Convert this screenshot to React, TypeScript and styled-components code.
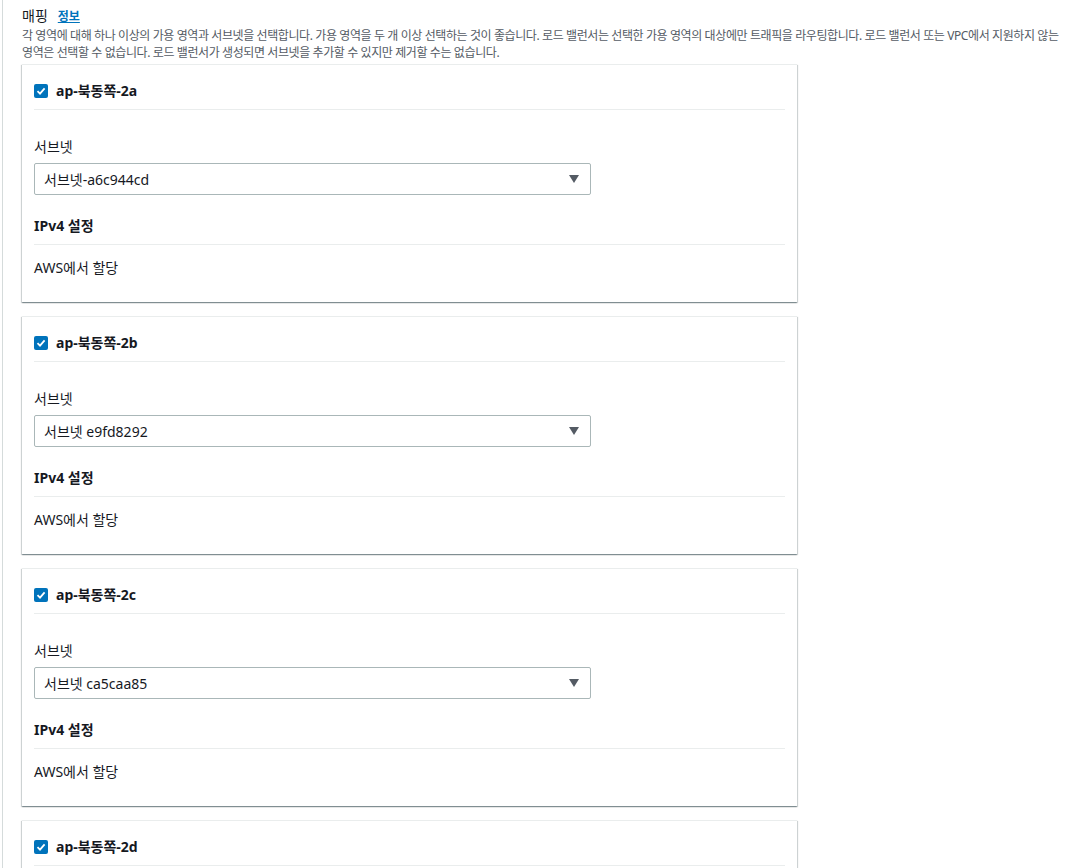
import React from 'react';
import styled, { createGlobalStyle } from 'styled-components';

const GlobalStyle = createGlobalStyle`
    body {
        margin: 0;
        background: #ffffff;
        font-family: 'Noto Sans', 'Noto Sans CJK KR', sans-serif;
        color: #16191f;
    }
`;

const Page = styled.div`
    margin-left: 2px;
    border-left: 1px solid #d5dbdb;
    padding: 6px 4px 40px 19px;
    min-height: 868px;
    box-sizing: border-box;
`;

const Heading = styled.div`
    display: flex;
    align-items: baseline;
    gap: 10px;
    font-size: 14px;
    line-height: 20px;
    color: #16191f;
`;

const InfoLink = styled.a`
    font-size: 12px;
    font-weight: 700;
    color: #0073bb;
    text-decoration: underline;
`;

const Description = styled.p`
    margin: 0 0 3px;
    font-size: 12px;
    line-height: 17px;
    letter-spacing: -0.4px;
    word-break: keep-all;
    color: #545b64;
    max-width: 1046px;
`;

const CardList = styled.div`
    display: flex;
    flex-direction: column;
    gap: 14px;
    width: 775px;
`;

const Card = styled.div`
    background: #ffffff;
    border-top: 1px solid #eaeded;
    box-shadow: 0 1px 1px 0 rgba(0, 28, 36, 0.3), 1px 1px 1px 0 rgba(0, 28, 36, 0.15),
        -1px 1px 1px 0 rgba(0, 28, 36, 0.15);
    padding: 0 12px 24px;
`;

const CardHeader = styled.div`
    display: flex;
    align-items: center;
    gap: 8px;
    padding: 17px 0 9px;
    border-bottom: 1px solid #eaeded;
`;

const CheckBox = styled.span`
    width: 14px;
    height: 14px;
    border-radius: 2px;
    background: #0073bb;
    display: flex;
    align-items: center;
    justify-content: center;
`;

const Title = styled.span`
    font-size: 14px;
    line-height: 18px;
    font-weight: 700;
`;

const Label = styled.div`
    margin-top: 27px;
    font-size: 14px;
    line-height: 20px;
`;

const Select = styled.div`
    margin-top: 6px;
    width: 557px;
    height: 32px;
    box-sizing: border-box;
    border: 1px solid #aab7b8;
    border-radius: 2px;
    display: flex;
    align-items: center;
    justify-content: space-between;
    padding: 0 10px 0 9px;
    font-size: 14px;
`;

const Caret = styled.span`
    width: 0;
    height: 0;
    border-left: 5px solid transparent;
    border-right: 5px solid transparent;
    border-top: 8px solid #545b64;
    margin-right: 1px;
`;

const SectionTitle = styled.div`
    margin-top: 21px;
    padding-bottom: 8px;
    border-bottom: 1px solid #eaeded;
    font-size: 14px;
    line-height: 20px;
    font-weight: 700;
`;

const Value = styled.div`
    margin-top: 13px;
    font-size: 14px;
    line-height: 20px;
`;

const zones = [
    { name: 'ap-북동쪽-2a', subnet: '서브넷-a6c944cd' },
    { name: 'ap-북동쪽-2b', subnet: '서브넷 e9fd8292' },
    { name: 'ap-북동쪽-2c', subnet: '서브넷 ca5caa85' },
    { name: 'ap-북동쪽-2d', subnet: '서브넷 0b1a2c3d' },
];

const Check = () => (
    <svg width="10" height="10" viewBox="0 0 10 10">
        <path d="M1.5 5.2 L4 7.6 L8.6 2.4" stroke="#fff" strokeWidth="1.8" fill="none" />
    </svg>
);

export default function App() {
    return (
        <>
            <GlobalStyle />
            <Page>
                <Heading>
                    매핑 <InfoLink>정보</InfoLink>
                </Heading>
                <Description>
                    각 영역에 대해 하나 이상의 가용 영역과 서브넷을 선택합니다. 가용 영역을 두 개 이상
                    선택하는 것이 좋습니다. 로드 밸런서는 선택한 가용 영역의 대상에만 트래픽을
                    라우팅합니다. 로드 밸런서 또는 VPC에서 지원하지 않는 영역은 선택할 수 없습니다. 로드
                    밸런서가 생성되면 서브넷을 추가할 수 있지만 제거할 수는 없습니다.
                </Description>
                <CardList>
                    {zones.map(zone => (
                        <Card key={zone.name}>
                            <CardHeader>
                                <CheckBox>
                                    <Check />
                                </CheckBox>
                                <Title>{zone.name}</Title>
                            </CardHeader>
                            <Label>서브넷</Label>
                            <Select>
                                {zone.subnet}
                                <Caret />
                            </Select>
                            <SectionTitle>IPv4 설정</SectionTitle>
                            <Value>AWS에서 할당</Value>
                        </Card>
                    ))}
                </CardList>
            </Page>
        </>
    );
}
